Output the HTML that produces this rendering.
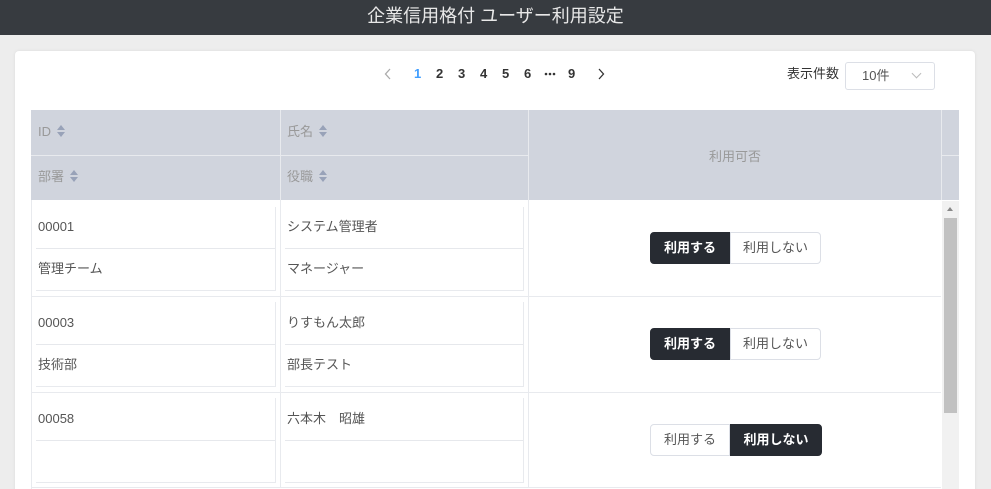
<!DOCTYPE html>
<html><head><meta charset="utf-8"><style>
*{box-sizing:border-box;margin:0;padding:0}
html,body{width:991px;height:489px;overflow:hidden}
body{background:#ededed;font-family:"Liberation Sans","Noto Sans CJK JP",sans-serif;position:relative;font-size:13px;color:#555}
.a{position:absolute;line-height:16px}
.top{left:0;top:0;width:991px;height:35px;background:#373b40;color:#e8e8e8;font-size:18px;text-align:center;line-height:32px}
.card{left:15px;top:51px;width:960px;height:460px;background:#fff;border-radius:4px;box-shadow:0 0 3px rgba(0,0,0,.08)}
.pg{top:66px;font-size:13px;font-weight:bold;color:#333}
.hd{background:#d0d4dd;color:#999;font-size:13px}
.sort{display:inline-block;vertical-align:-1px;margin-left:6px;width:9px;height:12px;position:relative}
.sort:before{content:"";position:absolute;left:0;top:0;border:4.5px solid transparent;border-bottom:5px solid #98a2b8;border-top:0}
.sort:after{content:"";position:absolute;left:0;bottom:0;border:4.5px solid transparent;border-top:5px solid #98a2b8;border-bottom:0}
.cell{color:#555;font-size:13px}
.ln{background:#e6e8ec}
.btn{height:32px;line-height:30px;text-align:center;font-size:13px;border:1px solid #dcdfe6}
.dk{background:#272b32;color:#fff;border-color:#272b32;font-weight:bold}
.lt{background:#fff;color:#555}
</style></head><body>
<div class="a top">企業信用格付 ユーザー利用設定</div>
<div class="a card"></div>
<svg class="a" style="left:384px;top:68px" width="8" height="12"><path d="M6 1L1.5 6L6 11" fill="none" stroke="#aaa" stroke-width="1.3"/></svg>
<div class="a pg" style="left:414px;color:#409eff">1</div>
<div class="a pg" style="left:436px">2</div>
<div class="a pg" style="left:458px">3</div>
<div class="a pg" style="left:480px">4</div>
<div class="a pg" style="left:502px">5</div>
<div class="a pg" style="left:524px">6</div>
<svg class="a" style="left:544px;top:72px" width="12" height="4"><circle cx="2" cy="2" r="1.3" fill="#333"/><circle cx="6" cy="2" r="1.3" fill="#333"/><circle cx="10" cy="2" r="1.3" fill="#333"/></svg>
<div class="a pg" style="left:568px">9</div>
<svg class="a" style="left:597px;top:68px" width="8" height="12"><path d="M2 1L6.5 6L2 11" fill="none" stroke="#333" stroke-width="1.3"/></svg>
<div class="a" style="left:787px;top:66px;color:#333">表示件数</div>
<div class="a" style="left:845px;top:62px;width:90px;height:28px;border:1px solid #dcdfe6;border-radius:3px;padding-left:16px;line-height:26px;color:#555">10件<span style="position:absolute;right:14px;top:7px;width:7px;height:7px;border-right:1px solid #bbb;border-bottom:1px solid #bbb;transform:rotate(45deg)"></span></div>
<div class="a hd" style="left:31px;top:110px;width:928px;height:90px"></div>
<div class="a" style="left:280px;top:110px;width:1px;height:378px;background:#e8eaee"></div>
<div class="a" style="left:528px;top:110px;width:1px;height:378px;background:#e8eaee"></div>
<div class="a" style="left:941px;top:110px;width:1px;height:90px;background:#e8eaee"></div>
<div class="a" style="left:31px;top:155px;width:497px;height:1px;background:#e8eaee"></div>
<div class="a" style="left:941px;top:155px;width:18px;height:1px;background:#e8eaee"></div>
<div class="a hd" style="left:38px;top:124px;background:none">ID<span class="sort"></span></div>
<div class="a hd" style="left:38px;top:169px;background:none">部署<span class="sort"></span></div>
<div class="a hd" style="left:287px;top:124px;background:none">氏名<span class="sort"></span></div>
<div class="a hd" style="left:287px;top:169px;background:none">役職<span class="sort"></span></div>
<div class="a hd" style="left:529px;top:149px;width:412px;text-align:center;background:none">利用可否</div>
<div class="a" style="left:31px;top:200px;width:1px;height:289px;background:#e8eaee"></div>
<div class="a" style="left:31px;top:296px;width:910px;height:1px;background:#e8eaee"></div>
<div class="a" style="left:31px;top:392px;width:910px;height:1px;background:#e8eaee"></div>
<div class="a" style="left:31px;top:487px;width:910px;height:1px;background:#e8eaee"></div>
<div class="a" style="left:36px;top:207px;width:240px;height:84px;border-right:1px solid #e8eaee;border-bottom:1px solid #e8eaee"></div>
<div class="a" style="left:285px;top:207px;width:239px;height:84px;border-right:1px solid #e8eaee;border-bottom:1px solid #e8eaee"></div>
<div class="a ln" style="left:36px;top:248px;width:239px;height:1px"></div>
<div class="a ln" style="left:285px;top:248px;width:238px;height:1px"></div>
<div class="a" style="left:36px;top:302px;width:240px;height:85px;border-right:1px solid #e8eaee;border-bottom:1px solid #e8eaee"></div>
<div class="a" style="left:285px;top:302px;width:239px;height:85px;border-right:1px solid #e8eaee;border-bottom:1px solid #e8eaee"></div>
<div class="a ln" style="left:36px;top:344px;width:239px;height:1px"></div>
<div class="a ln" style="left:285px;top:344px;width:238px;height:1px"></div>
<div class="a" style="left:36px;top:398px;width:240px;height:85px;border-right:1px solid #e8eaee;border-bottom:1px solid #e8eaee"></div>
<div class="a" style="left:285px;top:398px;width:239px;height:85px;border-right:1px solid #e8eaee;border-bottom:1px solid #e8eaee"></div>
<div class="a ln" style="left:36px;top:440px;width:239px;height:1px"></div>
<div class="a ln" style="left:285px;top:440px;width:238px;height:1px"></div>
<div class="a cell" style="left:38px;top:219px">00001</div>
<div class="a cell" style="left:38px;top:261px">管理チーム</div>
<div class="a cell" style="left:287px;top:219px">システム管理者</div>
<div class="a cell" style="left:287px;top:261px">マネージャー</div>
<div class="a cell" style="left:38px;top:315px">00003</div>
<div class="a cell" style="left:38px;top:357px">技術部</div>
<div class="a cell" style="left:287px;top:315px">りすもん太郎</div>
<div class="a cell" style="left:287px;top:357px">部長テスト</div>
<div class="a cell" style="left:38px;top:411px">00058</div>
<div class="a cell" style="left:287px;top:411px">六本木　昭雄</div>
<div class="a btn dk" style="left:650px;top:232px;width:80px;border-radius:4px 0 0 4px">利用する</div>
<div class="a btn lt" style="left:730px;top:232px;width:91px;border-radius:0 4px 4px 0">利用しない</div>
<div class="a btn dk" style="left:650px;top:328px;width:80px;border-radius:4px 0 0 4px">利用する</div>
<div class="a btn lt" style="left:730px;top:328px;width:91px;border-radius:0 4px 4px 0">利用しない</div>
<div class="a btn lt" style="left:650px;top:424px;width:80px;border-radius:4px 0 0 4px">利用する</div>
<div class="a btn dk" style="left:730px;top:424px;width:92px;border-radius:0 4px 4px 0">利用しない</div>
<div class="a" style="left:942px;top:201px;width:17px;height:288px;background:#f1f1f1"></div>
<div class="a" style="left:947px;top:207px;border:3.5px solid transparent;border-bottom:4px solid #888;border-top:0"></div>
<div class="a" style="left:944px;top:218px;width:13px;height:195px;background:#c1c1c1"></div>
</body></html>
